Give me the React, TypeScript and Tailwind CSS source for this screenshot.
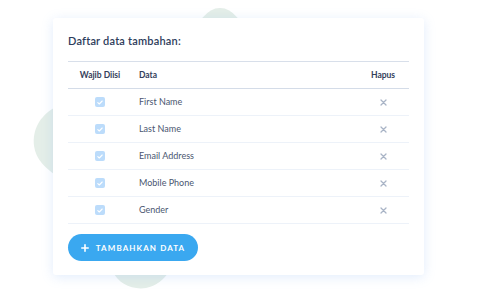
import React from 'react';

const rows = ['First Name', 'Last Name', 'Email Address', 'Mobile Phone', 'Gender'];

function CheckBox() {
  return (
    <span className="flex h-[10px] w-[10px] items-center justify-center rounded-[2px] bg-[#bcdcfb]">
      <svg width="6" height="5" viewBox="0 0 6 5" fill="none">
        <path d="M0.8 2.6 L2.3 4 L5.2 1" stroke="#ffffff" strokeWidth="1.1" strokeLinecap="round" strokeLinejoin="round" />
      </svg>
    </span>
  );
}

function RemoveIcon() {
  return (
    <svg width="7" height="7" viewBox="0 0 7 7" fill="none">
      <path d="M1 1 L6 6 M6 1 L1 6" stroke="#a9b4c6" strokeWidth="1.3" strokeLinecap="round" />
    </svg>
  );
}

export default function App() {
  return (
    <div className="relative h-[300px] w-[480px] overflow-hidden bg-white" style={{ fontFamily: 'Lato, "Open Sans", sans-serif' }}>
      {/* soft background shapes */}
      <svg className="absolute left-0 top-0" width="480" height="300" viewBox="0 0 480 300">
        <ellipse cx="220" cy="40" rx="24" ry="32" fill="#e4eee8" />
        <path d="M54 108 C40 116 32 130 34 146 C36 160 46 168 54 174 Z" fill="#e4eee8" />
        <path d="M112 270 C118 284 132 290 146 288 C156 286 164 280 170 270 Z" fill="#e4eee8" />
      </svg>

      <div className="relative ml-[53px] mt-[18px] flex h-[257px] w-[371px] flex-col rounded-[3px] bg-white px-[15px] pt-[15px] shadow-[0_2px_12px_rgba(120,170,240,0.22)]">
        <h2 className="text-[11px] leading-[16px] font-semibold tracking-[0.2px] text-[#2e3d5c]">Daftar data tambahan:</h2>

        <div className="mt-[12px] border-t-[1.5px] border-[#d8dfea]">
          <div className="flex h-[27px] items-center border-b-[1.5px] border-[#d4dce8] text-[8.5px] font-bold text-[#34405a]">
            <div className="w-[64px] text-center">Wajib Diisi</div>
            <div className="ml-[7px] flex-1">Data</div>
            <div className="w-[30px] text-center mr-[11px]">Hapus</div>
          </div>
          {rows.map((r) => (
            <div key={r} className="flex h-[27px] items-center border-b border-[#edf2f9] text-[9px] text-[#4a5670]">
              <div className="flex w-[64px] justify-center">
                <CheckBox />
              </div>
              <div className="ml-[7px] flex-1">{r}</div>
              <div className="mr-[11px] flex w-[30px] justify-center">
                <RemoveIcon />
              </div>
            </div>
          ))}
        </div>

        <button className="mt-[10px] flex h-[27px] w-[130px] items-center justify-center gap-[7px] rounded-full bg-[#3aa8f0] text-[8px] font-bold tracking-[1.1px] text-white">
          <svg width="8" height="8" viewBox="0 0 8 8" fill="none">
            <path d="M4 0.8 V7.2 M0.8 4 H7.2" stroke="#ffffff" strokeWidth="1.6" strokeLinecap="round" />
          </svg>
          TAMBAHKAN DATA
        </button>
      </div>
    </div>
  );
}
